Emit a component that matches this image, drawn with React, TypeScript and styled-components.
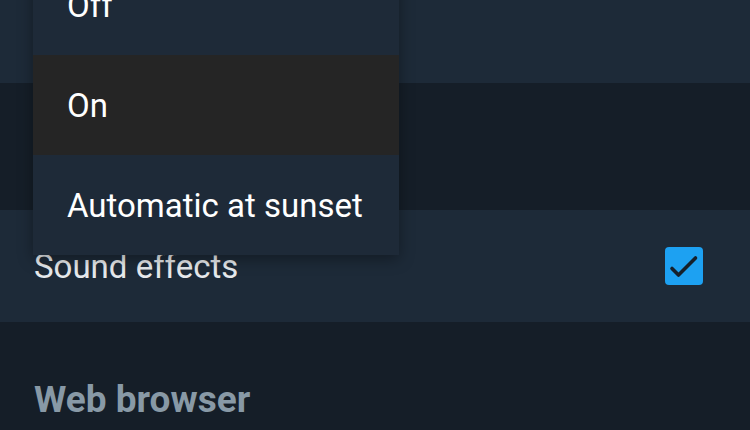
import { ReactElement } from 'react';
import styled, { createGlobalStyle } from 'styled-components';

const GlobalStyle = createGlobalStyle`
  html, body {
    margin: 0;
    padding: 0;
    background: #151e28;
    overflow: hidden;
  }
  body {
    font-family: Roboto, 'Noto Sans', sans-serif;
  }
`;

const Screen = styled.div`
  position: relative;
  width: 750px;
  height: 430px;
  background: #151e28;
  display: flex;
  flex-direction: column;
  overflow: hidden;
`;

const Row = styled.div<{ $height: number }>`
  height: ${(p) => p.$height}px;
  flex-shrink: 0;
  background: #1d2a38;
  display: flex;
  align-items: center;
  justify-content: space-between;
  padding: 0 47px 0 34px;
  box-sizing: border-box;
`;

const Gap = styled.div<{ $height: number }>`
  height: ${(p) => p.$height}px;
  flex-shrink: 0;
`;

const RowLabel = styled.span`
  font-size: 33px;
  color: #e6e9ec;
`;

const CheckBox = styled.span`
  width: 38px;
  height: 38px;
  border-radius: 4px;
  background: #1da1f2;
  display: flex;
`;

const SectionHeader = styled.h2`
  margin: 0;
  padding: 56px 34px 0;
  font-size: 37px;
  font-weight: 700;
  color: #8899a6;
`;

const Menu = styled.ul`
  position: absolute;
  left: 33px;
  top: -45px;
  width: 366px;
  margin: 0;
  padding: 0;
  list-style: none;
  background: #1e2a38;
  box-shadow: 0 4px 14px rgba(0, 0, 0, 0.35);
`;

const MenuItem = styled.li<{ $active?: boolean }>`
  height: 100px;
  display: flex;
  align-items: center;
  padding-left: 34px;
  font-size: 33px;
  color: #ffffff;
  background: ${(p) => (p.$active ? '#252525' : 'transparent')};
`;

function Check(): ReactElement {
  return (
    <svg width="38" height="38" viewBox="0 0 38 38" fill="none">
      <path d="M7 21.5 L13.5 28 L30.5 11" stroke="#15202b" strokeWidth="3.6" strokeLinecap="round" strokeLinejoin="round" />
    </svg>
  );
}

export default function App(): ReactElement {
  return (
    <Screen>
      <GlobalStyle />
      <Row $height={83} />
      <Gap $height={127} />
      <Row $height={112}>
        <RowLabel>Sound effects</RowLabel>
        <CheckBox>
          <Check />
        </CheckBox>
      </Row>
      <SectionHeader>Web browser</SectionHeader>
      <Menu>
        <MenuItem>Off</MenuItem>
        <MenuItem $active>On</MenuItem>
        <MenuItem>Automatic at sunset</MenuItem>
      </Menu>
    </Screen>
  );
}
